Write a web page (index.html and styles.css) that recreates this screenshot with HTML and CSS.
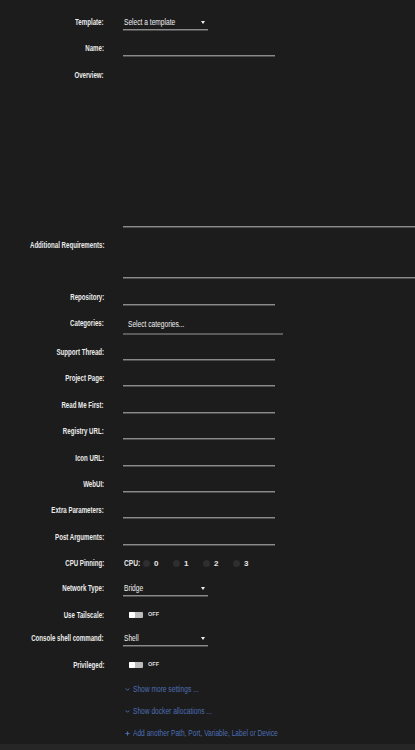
FILE: index.html
```html
<!DOCTYPE html>
<html lang="en">
<head>
    <meta charset="UTF-8">
    <meta name="viewport" content="width=device-width, initial-scale=1.0">
    <title>Add Container</title>
    <link rel="stylesheet" href="styles.css">
</head>
<body>
    <form class="container-form">
        <div class="row">
            <label class="row-label"><span class="label-text">Template:</span></label>
            <div class="select select-short"><span class="value-text">Select a template</span></div>
        </div>
        <div class="row">
            <label class="row-label"><span class="label-text">Name:</span></label>
            <input class="text-input" type="text">
        </div>
        <div class="row">
            <label class="row-label"><span class="label-text">Overview:</span></label>
            <textarea class="text-area area-tall"></textarea>
        </div>
        <div class="row">
            <label class="row-label"><span class="label-text">Additional Requirements:</span></label>
            <textarea class="text-area area-short"></textarea>
        </div>
        <div class="row">
            <label class="row-label"><span class="label-text">Repository:</span></label>
            <input class="text-input" type="text">
        </div>
        <div class="row row-categories">
            <label class="row-label"><span class="label-text">Categories:</span></label>
            <div class="categories"><span class="value-text">Select categories...</span></div>
        </div>
        <div class="row">
            <label class="row-label"><span class="label-text">Support Thread:</span></label>
            <input class="text-input" type="text">
        </div>
        <div class="row">
            <label class="row-label"><span class="label-text">Project Page:</span></label>
            <input class="text-input" type="text">
        </div>
        <div class="row">
            <label class="row-label"><span class="label-text">Read Me First:</span></label>
            <input class="text-input" type="text">
        </div>
        <div class="row">
            <label class="row-label"><span class="label-text">Registry URL:</span></label>
            <input class="text-input" type="text">
        </div>
        <div class="row">
            <label class="row-label"><span class="label-text">Icon URL:</span></label>
            <input class="text-input" type="text">
        </div>
        <div class="row">
            <label class="row-label"><span class="label-text">WebUI:</span></label>
            <input class="text-input" type="text">
        </div>
        <div class="row">
            <label class="row-label"><span class="label-text">Extra Parameters:</span></label>
            <input class="text-input" type="text">
        </div>
        <div class="row">
            <label class="row-label"><span class="label-text">Post Arguments:</span></label>
            <input class="text-input" type="text">
        </div>
        <div class="row row-plain">
            <label class="row-label"><span class="label-text">CPU Pinning:</span></label>
            <div class="cpu-list">
                <span class="cpu-title"><span class="value-text">CPU:</span></span>
                <span class="cpu"><span class="cpu-dot"></span>0</span>
                <span class="cpu"><span class="cpu-dot"></span>1</span>
                <span class="cpu"><span class="cpu-dot"></span>2</span>
                <span class="cpu"><span class="cpu-dot"></span>3</span>
            </div>
        </div>
        <div class="row">
            <label class="row-label"><span class="label-text">Network Type:</span></label>
            <div class="select select-short"><span class="value-text">Bridge</span></div>
        </div>
        <div class="row row-switch">
            <label class="row-label"><span class="label-text">Use Tailscale:</span></label>
            <div class="switch"><span class="switch-knob"></span><span class="switch-text">OFF</span></div>
        </div>
        <div class="row">
            <label class="row-label"><span class="label-text">Console shell command:</span></label>
            <div class="select select-short"><span class="value-text">Shell</span></div>
        </div>
        <div class="row row-switch">
            <label class="row-label"><span class="label-text">Privileged:</span></label>
            <div class="switch"><span class="switch-knob"></span><span class="switch-text">OFF</span></div>
        </div>

        <div class="links">
            <a class="link" href="#">
                <svg class="link-icon" viewBox="0 0 10 10"><path d="M1.5 3 L5 6.5 L8.5 3" fill="none" stroke="currentColor" stroke-width="2"/></svg>
                <span class="value-text">Show more settings ...</span>
            </a>
            <a class="link" href="#">
                <svg class="link-icon" viewBox="0 0 10 10"><path d="M1.5 3 L5 6.5 L8.5 3" fill="none" stroke="currentColor" stroke-width="2"/></svg>
                <span class="value-text">Show docker allocations ...</span>
            </a>
            <a class="link" href="#">
                <svg class="link-icon" viewBox="0 0 10 10"><path d="M5 1 V9 M1 5 H9" fill="none" stroke="currentColor" stroke-width="2.2"/></svg>
                <span class="value-text">Add another Path, Port, Variable, Label or Device</span>
            </a>
        </div>
    </form>

    <div class="bottom-bar"></div>
</body>
</html>
```

FILE: styles.css
```css
/* Page */
body {
    margin: 0;
    background-color: #1c1c1c;
    color: #e4e4e4;
    font-family: "Liberation Sans", Arial, sans-serif;
    font-size: 8.5px;
    overflow-x: hidden;
}

.container-form {
    padding-top: 15px;
}

/* Rows */
.row {
    display: flex;
    align-items: flex-start;
    margin-bottom: 11.4px;
}

.row-label {
    width: 104px;
    flex-shrink: 0;
    margin-right: 19px;
    text-align: right;
    line-height: 14px;
    font-weight: bold;
    color: #ececec;
    white-space: nowrap;
}

.label-text {
    display: inline-block;
    transform: scaleX(0.72);
    transform-origin: 100% 50%;
}

.value-text {
    display: inline-block;
    white-space: nowrap;
    transform: scaleX(0.78);
    transform-origin: 0 50%;
}

.row-plain {
    height: 14px;
}

.row-switch {
    height: 12px;
}

/* Inputs */
.text-input,
.text-area,
.select {
    box-sizing: border-box;
    background: transparent;
    border: none;
    border-bottom: 1px solid #8a8a8a;
    box-shadow: 0 1px 0 #4e4e4e;
    color: #f2f2f2;
    font-family: inherit;
    font-size: 8.5px;
    outline: none;
    padding: 0 1px;
    margin: 0;
}

.text-input {
    width: 152px;
    height: 15px;
}

.text-area {
    width: 320px;
    resize: none;
}

.area-tall {
    height: 159px;
}

.area-short {
    height: 40px;
}

.select {
    position: relative;
    height: 15px;
    line-height: 14px;
}

.select-short {
    width: 85px;
}

.select::after {
    content: "";
    position: absolute;
    right: 3px;
    top: 6px;
    border-left: 2px solid transparent;
    border-right: 2px solid transparent;
    border-top: 3px solid #f0f0f0;
}

.row-categories {
    margin-bottom: 10px;
}

.categories {
    box-sizing: border-box;
    width: 160px;
    height: 19px;
    padding: 2px 5px 0;
    line-height: 13px;
    color: #f2f2f2;
    border-bottom: 2px solid #5a5a5a;
}

/* CPU pinning */
.cpu-list {
    display: flex;
    align-items: center;
    height: 14px;
    padding-left: 1px;
    font-weight: bold;
    color: #e8e8e8;
}

.cpu-title {
    width: 19px;
}

.cpu {
    display: flex;
    align-items: center;
    width: 30px;
    font-size: 8px;
}

.cpu-dot {
    width: 7px;
    height: 7px;
    border-radius: 50%;
    background-color: #2e2e2e;
    margin-right: 4px;
}

/* Switch */
.switch {
    display: flex;
    align-items: center;
    height: 14px;
    padding-left: 6px;
}

.switch-knob {
    position: relative;
    width: 14px;
    height: 6px;
    border-radius: 1px;
    background-color: #bdbdbd;
}

.switch-knob::before {
    content: "";
    position: absolute;
    left: 0;
    top: 0;
    width: 6px;
    height: 6px;
    border-radius: 1px;
    background-color: #ffffff;
}

.switch-text {
    margin-left: 5px;
    margin-top: -2px;
    font-size: 5.5px;
    font-weight: bold;
    color: #dcdcdc;
}

/* Links */
.links {
    display: flex;
    flex-direction: column;
    gap: 10px;
    padding-left: 125px;
    padding-top: 2px;
}

.link {
    display: flex;
    align-items: center;
    height: 12px;
    color: #4c6eb6;
    text-decoration: none;
}

.link-icon {
    width: 5px;
    height: 5px;
    margin-right: 3px;
    flex-shrink: 0;
}

.bottom-bar {
    margin-top: 5px;
    height: 20px;
    background-color: #262626;
}
```
